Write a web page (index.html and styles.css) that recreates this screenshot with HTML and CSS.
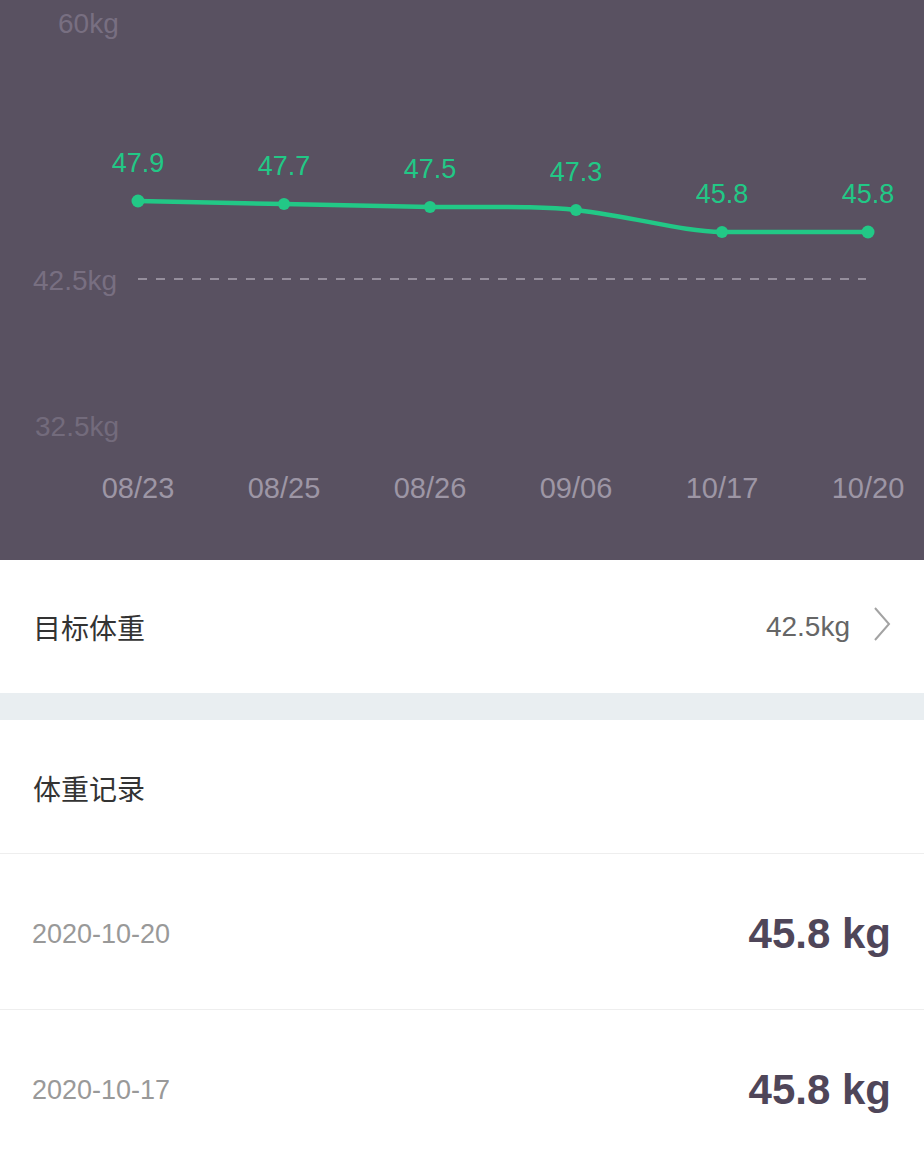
FILE: index.html
```html
<!DOCTYPE html>
<html lang="zh-CN">
<head>
    <meta charset="UTF-8">
    <title>体重记录</title>
    <link rel="stylesheet" href="styles.css">
</head>
<body>
    <div class="chart">
        <svg class="chart-svg" width="924" height="560" viewBox="0 0 924 560">
            <!-- axis labels -->
            <text class="axis-label" x="58" y="33">60kg</text>
            <text class="axis-label" x="33" y="290">42.5kg</text>
            <text class="axis-label dim" x="35" y="436">32.5kg</text>

            <!-- goal line -->
            <line class="goal-line" x1="138" y1="279" x2="866" y2="279"></line>

            <!-- weight curve -->
            <path class="curve" d="M138,201 L284,204 L430,207 C500,207 545,206 576,210 C640,218 680,231 722,232 L868,232"></path>
            <circle class="dot" cx="138" cy="201" r="6.5"></circle>
            <circle class="dot" cx="284" cy="204" r="6"></circle>
            <circle class="dot" cx="430" cy="207" r="6"></circle>
            <circle class="dot" cx="576" cy="210" r="6"></circle>
            <circle class="dot" cx="722" cy="232" r="6"></circle>
            <circle class="dot" cx="868" cy="232" r="6.5"></circle>

            <text class="value" x="138" y="172">47.9</text>
            <text class="value" x="284" y="175">47.7</text>
            <text class="value" x="430" y="178">47.5</text>
            <text class="value" x="576" y="181">47.3</text>
            <text class="value" x="722" y="203">45.8</text>
            <text class="value" x="868" y="203">45.8</text>

            <!-- dates -->
            <text class="date" x="138" y="498">08/23</text>
            <text class="date" x="284" y="498">08/25</text>
            <text class="date" x="430" y="498">08/26</text>
            <text class="date" x="576" y="498">09/06</text>
            <text class="date" x="722" y="498">10/17</text>
            <text class="date" x="868" y="498">10/20</text>
        </svg>
    </div>

    <div class="row target-row">
        <span class="row-title">目标体重</span>
        <span class="target-value">
            42.5kg
            <svg class="chevron" width="20" height="36" viewBox="0 0 20 36">
                <path d="M3,2 L17,18 L3,34" fill="none" stroke="#a3a3a3" stroke-width="2"></path>
            </svg>
        </span>
    </div>

    <div class="spacer"></div>

    <div class="row section-row">
        <span class="row-title">体重记录</span>
    </div>

    <div class="row record">
        <span class="record-date">2020-10-20</span>
        <span class="record-weight">45.8 kg</span>
    </div>
    <div class="row record">
        <span class="record-date">2020-10-17</span>
        <span class="record-weight">45.8 kg</span>
    </div>
</body>
</html>
```

FILE: styles.css
```css
:root {
    --chart-bg: #595161;
    --green: #22c886;
    --dark-text: #4f4659;
}

* {
    margin: 0;
    padding: 0;
    box-sizing: border-box;
}

body {
    font-family: 'Liberation Sans', 'Noto Sans CJK SC', sans-serif;
    background-color: white;
    color: #333;
    width: 924px;
}

/* Chart */
.chart {
    background-color: var(--chart-bg);
    height: 560px;
}

.chart-svg {
    display: block;
}

.chart-svg text {
    font-family: 'Liberation Sans', sans-serif;
}

.axis-label {
    font-size: 28px;
    fill: #786f81;
}

.axis-label.dim {
    fill: #736b7c;
}

.goal-line {
    stroke: #958e9c;
    stroke-width: 2;
    stroke-dasharray: 9 9;
}

.curve {
    fill: none;
    stroke: var(--green);
    stroke-width: 4.5;
    stroke-linejoin: round;
}

.dot {
    fill: var(--green);
}

.value {
    font-size: 27px;
    fill: var(--green);
    text-anchor: middle;
}

.date {
    font-size: 29px;
    fill: #9d96a5;
    text-anchor: middle;
}

/* Rows */
.row {
    display: flex;
    align-items: center;
    justify-content: space-between;
    padding: 0 33px;
}

.row-title {
    font-size: 28px;
    color: #333;
}

.target-row {
    height: 133px;
}

.target-value {
    display: flex;
    align-items: center;
    gap: 22px;
    font-size: 28px;
    color: #666;
    margin-right: -1px;
}

.chevron {
    display: block;
    margin-top: -6px;
}

.spacer {
    height: 27px;
    background-color: #e9eef1;
}

.section-row {
    height: 134px;
    padding-top: 3px;
    border-bottom: 1px solid #eeeeee;
}

.record {
    height: 156px;
    padding-top: 5px;
    padding-left: 32px;
    border-bottom: 1px solid #eeeeee;
}

.record-date {
    font-size: 27px;
    color: #999;
}

.record-weight {
    font-size: 42px;
    font-weight: bold;
    color: var(--dark-text);
}
```
